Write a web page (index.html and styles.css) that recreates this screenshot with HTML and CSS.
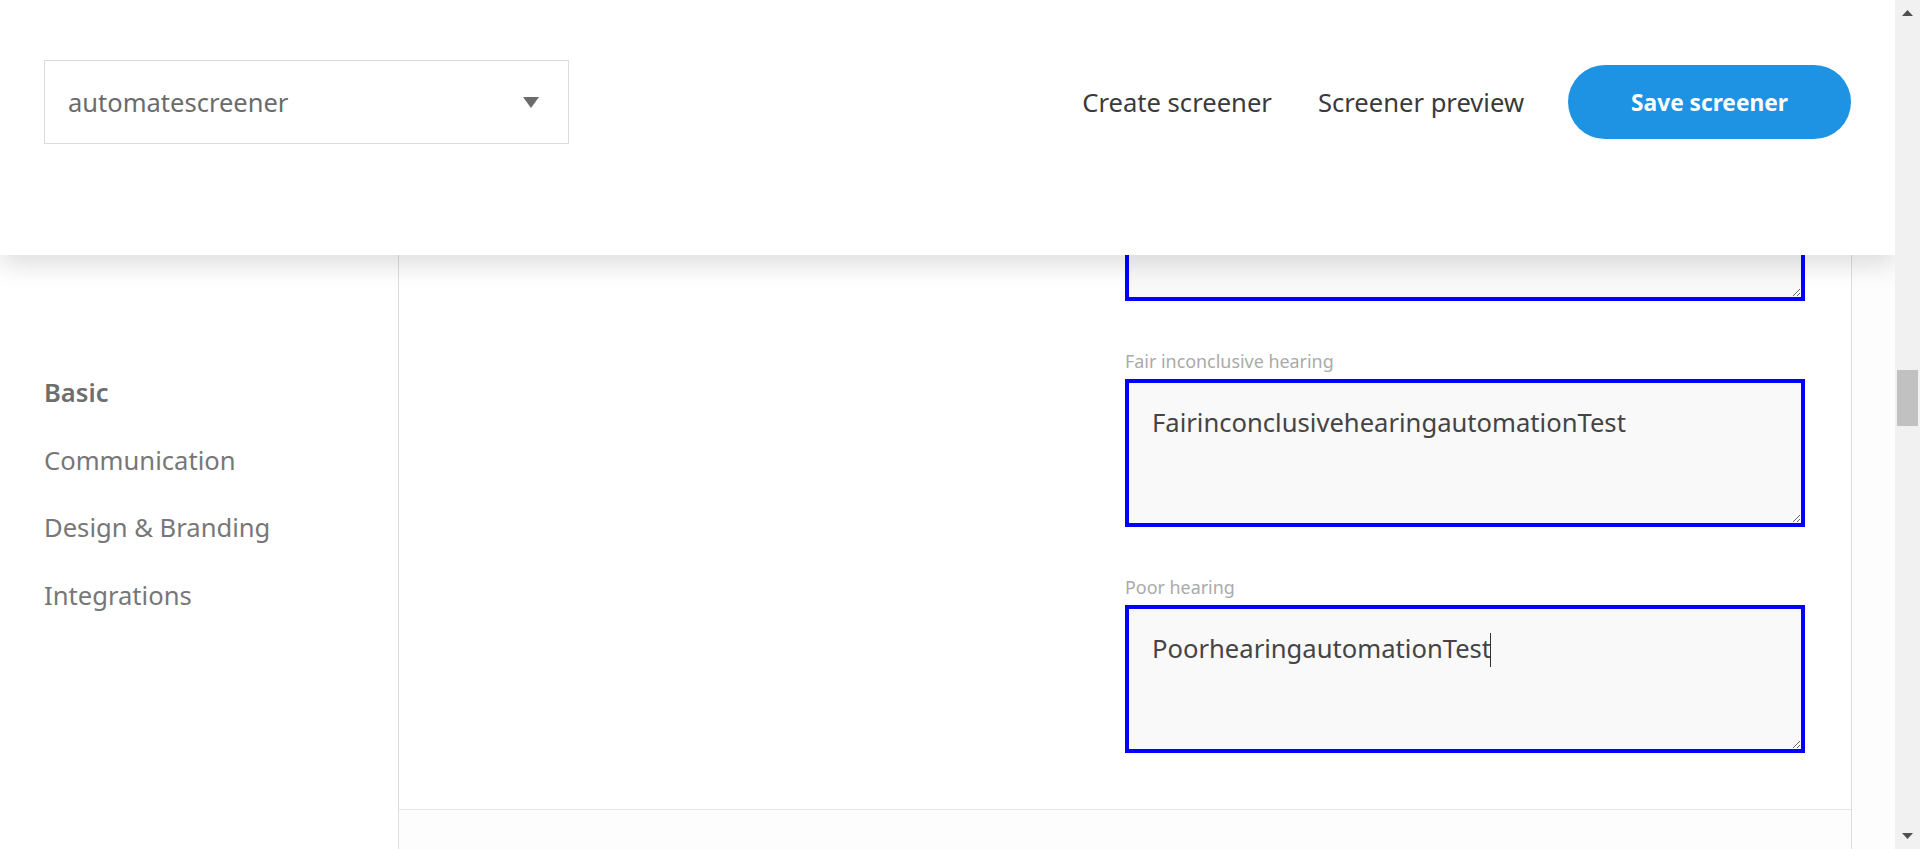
FILE: index.html
```html
<!DOCTYPE html>
<html lang="en">
<head>
<meta charset="utf-8">
<title>Screener settings</title>
<link rel="stylesheet" href="styles.css">
</head>
<body>
<div class="app">
  <div class="viewport">
    <header class="topbar">
      <div class="select">
        <span class="select-value">automatescreener</span>
        <svg class="select-caret" width="16" height="11" viewBox="0 0 16 11" aria-hidden="true"><path d="M0 0H16L8 11Z" fill="#6b6b6b"/></svg>
      </div>
      <nav class="topnav">
        <a class="topnav-link">Create screener</a>
        <a class="topnav-link">Screener preview</a>
        <button class="btn-save" type="button">Save screener</button>
      </nav>
    </header>
    <div class="content">
      <aside class="sidebar">
        <a class="side-link is-active">Basic</a>
        <a class="side-link">Communication</a>
        <a class="side-link">Design &amp; Branding</a>
        <a class="side-link">Integrations</a>
      </aside>
      <main class="panel">
        <section class="form">
          <div class="fields">
            <div class="field">
              <textarea class="input"></textarea>
            </div>
            <div class="field">
              <label class="field-label">Fair inconclusive hearing</label>
              <textarea class="input">FairinconclusivehearingautomationTest</textarea>
            </div>
            <div class="field">
              <label class="field-label">Poor hearing</label>
              <div class="input-wrap">
                <textarea class="input">PoorhearingautomationTest</textarea>
                <span class="text-caret"></span>
              </div>
            </div>
          </div>
        </section>
        <div class="panel-foot"></div>
      </main>
      <div class="gutter"></div>
    </div>
  </div>
  <div class="scrollbar">
    <div class="sb-arrow"><svg width="11" height="6" viewBox="0 0 11 6"><path d="M0 6H11L5.5 0Z" fill="#505050"/></svg></div>
    <div class="sb-track"><div class="sb-thumb"></div></div>
    <div class="sb-arrow"><svg width="11" height="6" viewBox="0 0 11 6"><path d="M0 0H11L5.5 6Z" fill="#505050"/></svg></div>
  </div>
</div>
</body>
</html>
```

FILE: styles.css
```css
html, body {
  margin: 0;
  padding: 0;
  height: 100%;
  overflow: hidden;
  background: #fff;
  font-family: "Noto Sans", "Open Sans", sans-serif;
}

.app {
  display: flex;
  height: 849px;
}

.viewport {
  flex: 1;
  position: relative;
  overflow: hidden;
}

/* header */
.topbar {
  position: absolute;
  top: 0;
  left: 0;
  right: 0;
  height: 255px;
  box-sizing: border-box;
  padding: 60px 44px 0;
  display: flex;
  justify-content: space-between;
  align-items: flex-start;
  background: #fff;
  box-shadow: 0 10px 24px rgba(0, 0, 0, 0.13);
  z-index: 2;
}

.select {
  width: 525px;
  height: 84px;
  box-sizing: border-box;
  border: 1px solid #dcdcdc;
  display: flex;
  align-items: center;
  justify-content: space-between;
  padding: 0 29px 0 23px;
}

.select-value {
  font-size: 25.5px;
  color: #6b6b6b;
}

.select-caret {
  display: block;
}

.topnav {
  display: flex;
  align-items: center;
  height: 74px;
  margin-top: 5px;
}

.topnav-link {
  font-size: 25.6px;
  color: #3a3a3a;
  margin-right: 46px;
  cursor: pointer;
}

.topnav-link + .topnav-link {
  margin-right: 44px;
}

.btn-save {
  width: 283px;
  height: 74px;
  border: none;
  border-radius: 37px;
  background: #1e93e4;
  color: #fff;
  font-family: "Noto Sans", "Open Sans", sans-serif;
  font-weight: 700;
  font-size: 22.7px;
  padding: 0;
  cursor: pointer;
}

/* content */
.content {
  display: flex;
  height: 100%;
}

.sidebar {
  width: 399px;
  flex: none;
  box-sizing: border-box;
  border-right: 1px solid #dedede;
  padding: 376px 0 0 44px;
  display: flex;
  flex-direction: column;
  gap: 33.7px;
}

.side-link {
  font-size: 25.6px;
  line-height: 34px;
  color: #777;
  cursor: pointer;
}

.side-link.is-active {
  font-weight: 600;
  color: #6e6e6e;
}

.panel {
  width: 1453px;
  flex: none;
  box-sizing: border-box;
  border-right: 1px solid #dedede;
  display: flex;
  flex-direction: column;
}

.form {
  padding: 153px 46px 56px 0;
  display: flex;
  justify-content: flex-end;
}

.fields {
  width: 680px;
}

.field {
  display: flex;
  flex-direction: column;
}

.field + .field {
  margin-top: 48px;
}

.field-label {
  font-size: 17.9px;
  line-height: 24px;
  color: #aaa;
  margin-bottom: 6px;
}

.input-wrap {
  position: relative;
  height: 148px;
}

.input {
  display: block;
  width: 680px;
  height: 148px;
  box-sizing: border-box;
  border: 4px solid #0000ff;
  padding: 23px;
  margin: 0;
  font-family: "Noto Sans", "Open Sans", sans-serif;
  font-size: 25.6px;
  line-height: 34px;
  color: #444;
  background: #f9f9f9;
  outline: none;
  caret-color: #333;
}

.text-caret {
  position: absolute;
  left: 365px;
  top: 28px;
  width: 1px;
  height: 34px;
  background: #333;
}

.panel-foot {
  flex: 1;
  border-top: 1px solid #e6e6e6;
  background: #fdfdfd;
}

.gutter {
  flex: 1;
  background: #fdfdfd;
}

/* scrollbar */
.scrollbar {
  width: 25px;
  flex: none;
  background: #f1f1f1;
  display: flex;
  flex-direction: column;
}

.sb-arrow {
  height: 26px;
  display: flex;
  align-items: center;
  justify-content: center;
}

.sb-arrow svg {
  display: block;
}

.sb-track {
  flex: 1;
}

.sb-thumb {
  margin: 344px 0 0 2px;
  width: 21px;
  height: 56px;
  background: #c1c1c1;
}
```
